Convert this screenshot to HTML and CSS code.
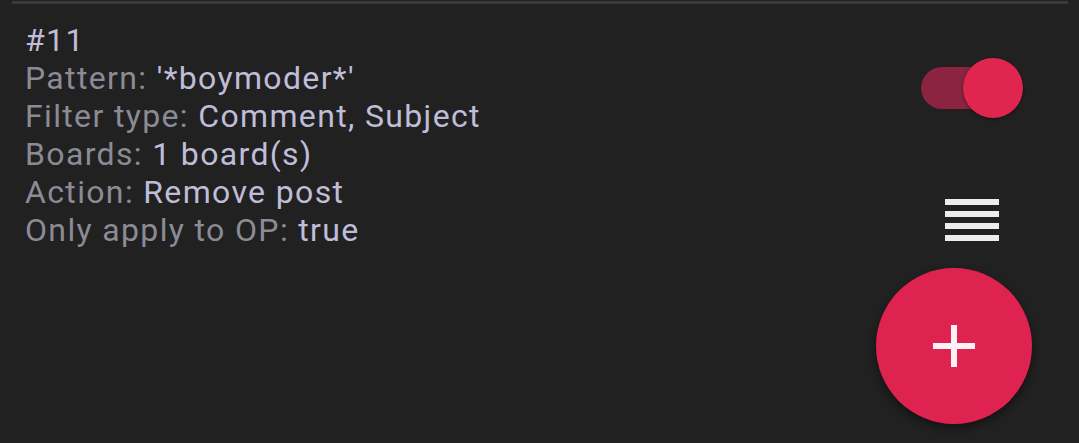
FILE: index.html
```html
<!DOCTYPE html>
<html>
<head>
<meta charset="utf-8">
<link rel="stylesheet" href="styles.css">
</head>
<body>
<div class="divider"></div>
<div class="filter-row">
  <div class="filter-text">
    <div class="line value">#11</div>
    <div class="line"><span class="label">Pattern: </span><span class="value">'*boymoder*'</span></div>
    <div class="line"><span class="label">Filter type: </span><span class="value">Comment, Subject</span></div>
    <div class="line"><span class="label">Boards: </span><span class="value">1 board(s)</span></div>
    <div class="line"><span class="label">Action: </span><span class="value">Remove post</span></div>
    <div class="line"><span class="label">Only apply to OP: </span><span class="value">true</span></div>
  </div>
  <div class="controls">
    <div class="switch">
      <div class="track"></div>
      <div class="thumb"></div>
    </div>
    <div class="handle">
      <span></span><span></span><span></span><span></span>
    </div>
  </div>
</div>
<button class="fab">
  <svg width="42" height="42" viewBox="0 0 42 42"><rect x="18" y="0" width="6" height="42" fill="#fbf2f6"/><rect x="0" y="18" width="42" height="6" fill="#fbf2f6"/></svg>
</button>
</body>
</html>
```
FILE: styles.css
```css
html, body {
  margin: 0;
  padding: 0;
  background: #212121;
  height: 100%;
  overflow: hidden;
}
body {
  font-family: Roboto, "Noto Sans", sans-serif;
  position: relative;
}
.divider {
  height: 3px;
  margin: 1px 11px 0 12px;
  background: #3a3a3a;
}
.filter-row {
  display: flex;
  justify-content: space-between;
  padding: 17px 47px 0 25px;
}
.filter-text {
  font-size: 32px;
  line-height: 38px;
  letter-spacing: 1.35px;
}
.label { color: #8b8b95; }
.value { color: #bfbdd8; }
.controls {
  width: 120px;
  display: flex;
  flex-direction: column;
  align-items: center;
  padding-top: 37px;
}
.switch {
  position: relative;
  width: 102px;
  height: 60px;
}
.track {
  margin-top: 9px;
  width: 79px;
  height: 42px;
  border-radius: 21px;
  background: #8a2440;
}
.thumb {
  position: absolute;
  right: 0;
  top: 0;
  width: 60px;
  height: 60px;
  border-radius: 50%;
  background: #e0264f;
  box-shadow: 0 1px 3px rgba(0,0,0,0.5);
}
.handle {
  margin-top: 81px;
  width: 54px;
  display: flex;
  flex-direction: column;
  gap: 6px;
}
.handle span {
  display: block;
  height: 6px;
  background: #ececec;
}
.fab {
  position: absolute;
  right: 47px;
  bottom: 19px;
  width: 156px;
  height: 156px;
  border: none;
  border-radius: 50%;
  background: #de2350;
  box-shadow: 0 4px 10px rgba(0,0,0,0.45);
  display: flex;
  align-items: center;
  justify-content: center;
  padding: 0;
}
.fab svg { display: block; }
```
